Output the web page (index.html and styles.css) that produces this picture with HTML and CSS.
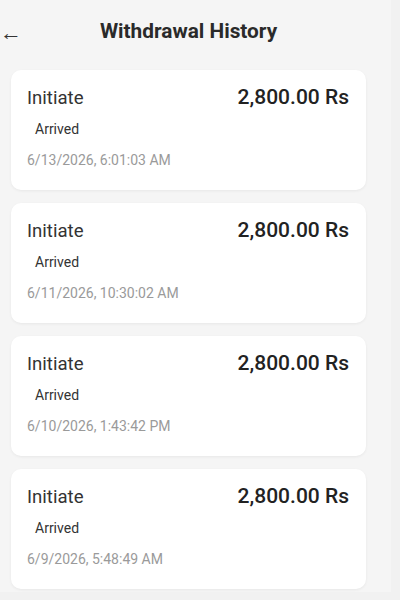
FILE: index.html
```html
<!DOCTYPE html>
<html>
<head>
<meta charset="utf-8">
<link rel="stylesheet" href="styles.css">
</head>
<body>
<div class="page">
  <header class="header">
    <span class="back">&larr;</span>
    <h1 class="title">Withdrawal History</h1>
  </header>
  <main class="list">
    <div class="card">
      <div class="row"><span class="type">Initiate</span><span class="amount">2,800.00 Rs</span></div>
      <div class="status">Arrived</div>
      <div class="date">6/13/2026, 6:01:03 AM</div>
    </div>
    <div class="card">
      <div class="row"><span class="type">Initiate</span><span class="amount">2,800.00 Rs</span></div>
      <div class="status">Arrived</div>
      <div class="date">6/11/2026, 10:30:02 AM</div>
    </div>
    <div class="card">
      <div class="row"><span class="type">Initiate</span><span class="amount">2,800.00 Rs</span></div>
      <div class="status">Arrived</div>
      <div class="date">6/10/2026, 1:43:42 PM</div>
    </div>
    <div class="card">
      <div class="row"><span class="type">Initiate</span><span class="amount">2,800.00 Rs</span></div>
      <div class="status">Arrived</div>
      <div class="date">6/9/2026, 5:48:49 AM</div>
    </div>
  </main>
</div>
</body>
</html>
```
FILE: styles.css
```css
html, body {
  margin: 0;
  padding: 0;
  background: #f1f1f1;
  font-family: Roboto, "Liberation Sans", Arial, sans-serif;
  color: #222;
}
.page {
  width: 391px;
  height: 592px;
  background: #f5f5f5;
  overflow: hidden;
}
.header {
  position: relative;
  height: 62px;
  display: flex;
  align-items: center;
  justify-content: center;
}
.back {
  position: absolute;
  left: 0;
  top: 22px;
  font-size: 22px;
  color: #333;
  line-height: 22px;
}
.title {
  margin: 0 14px 0 0;
  font-size: 20.8px;
  font-weight: 700;
  color: #2a2a2a;
}
.list {
  display: flex;
  flex-direction: column;
  gap: 13px;
  padding: 8px 0 0 11px;
}
.card {
  width: 355px;
  height: 120px;
  box-sizing: border-box;
  background: #fff;
  border-radius: 10px;
  box-shadow: 0 1px 3px rgba(0,0,0,0.06);
  padding: 15px 17px 0 16px;
}
.row {
  display: flex;
  justify-content: space-between;
  align-items: baseline;
}
.type {
  font-size: 18.6px;
  color: #333;
}
.amount {
  font-size: 21px;
  font-weight: 500;
  color: #222;
}
.status {
  margin: 12px 0 0 8px;
  font-size: 14px;
  color: #333;
}
.date {
  margin-top: 15px;
  font-size: 14px;
  color: #9a9a9a;
}
```
